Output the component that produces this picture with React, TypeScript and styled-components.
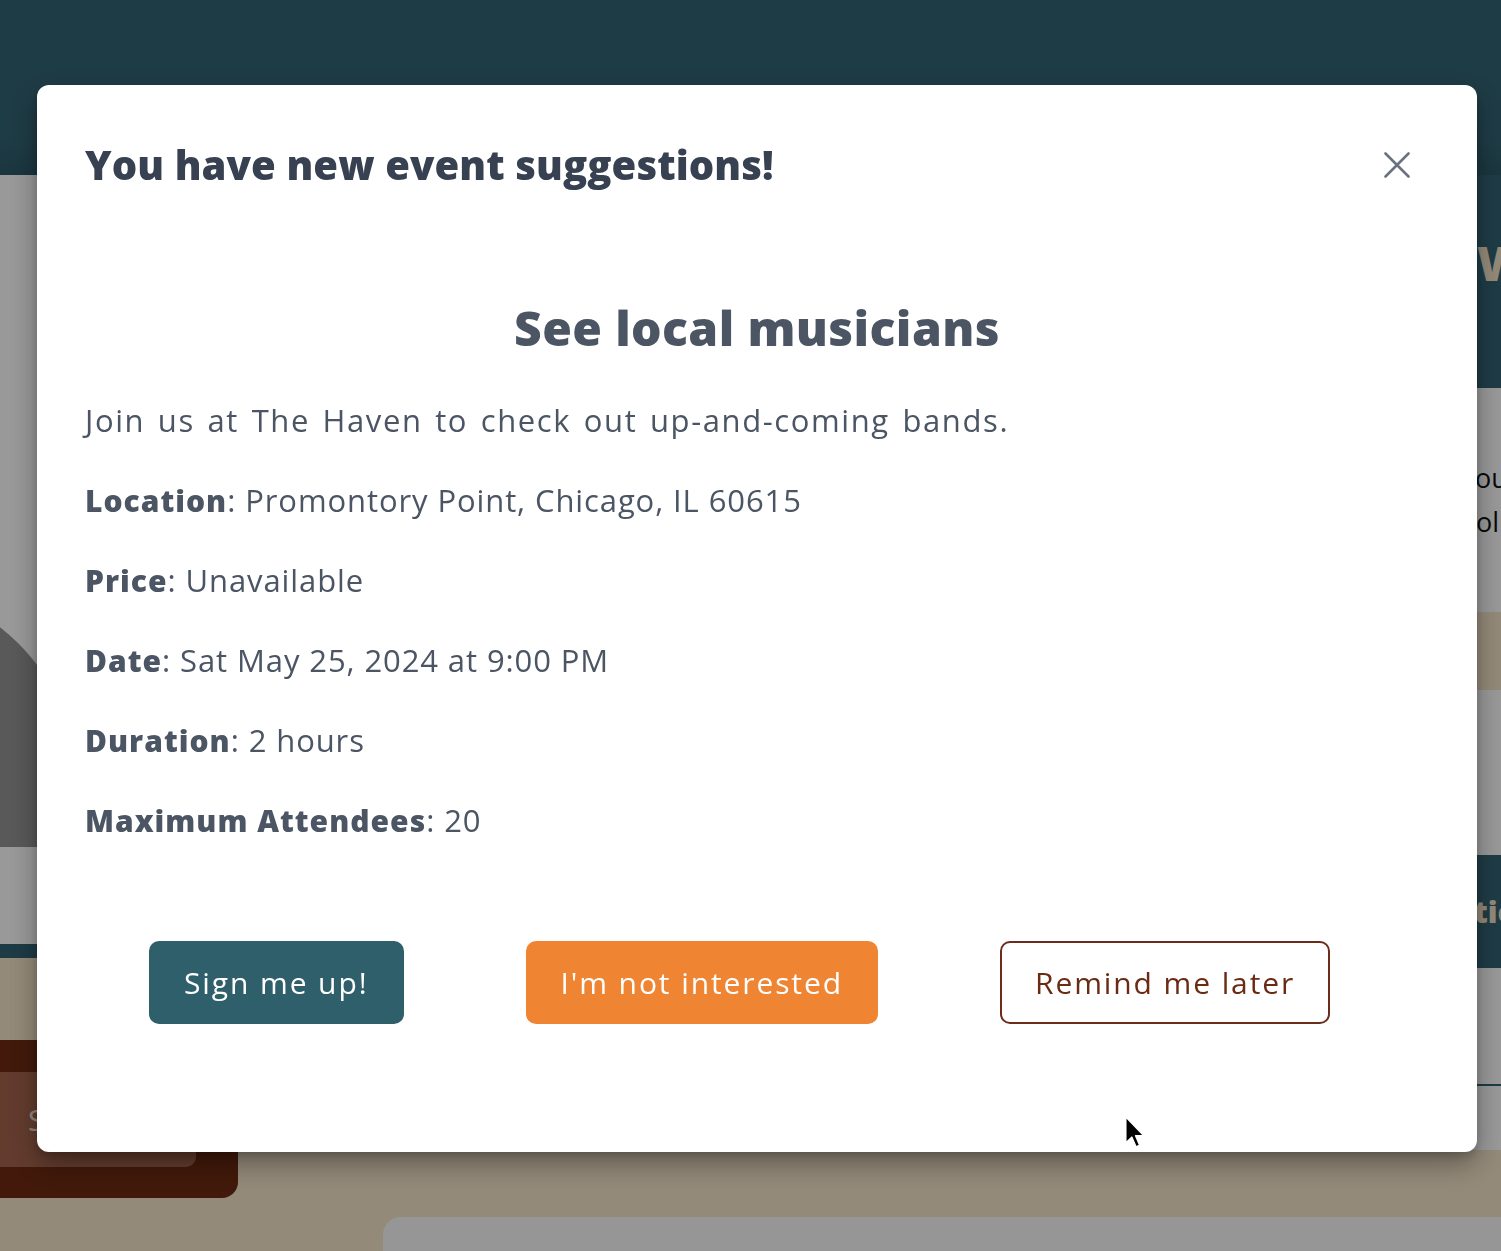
import React from "react";
import styled, { createGlobalStyle } from "styled-components";

const Global = createGlobalStyle`
  html, body { margin: 0; padding: 0; }
  body {
    font-family: "Open Sans", "Noto Sans", sans-serif;
    background: #f7e6cb;
    overflow: hidden;
  }
  *, *::before, *::after { box-sizing: border-box; }
`;

/* ---------- page behind the modal ---------- */

const Page = styled.div`
  width: 1501px;
  height: 1251px;
  background: #f7e6cb;
  display: flex;
  flex-direction: column;
  overflow: hidden;
`;

const TopBar = styled.header`
  height: 175px;
  flex-shrink: 0;
  background: linear-gradient(180deg, #336474 0%, #336474 80%, #2c5a69 100%);
`;

const Columns = styled.div`
  display: grid;
  grid-template-columns: 1400px 101px;
  align-items: start;
`;

const LeftCol = styled.div`
  display: flex;
  flex-direction: column;
  gap: 82px;
`;

const ProfilePanel = styled.section`
  height: 783px;
  background: #ffffff;
  border-bottom: 14px solid #326273;
  padding-top: 410px;
  overflow: hidden;
`;

const AvatarFrame = styled.div`
  height: 262px;
  overflow: hidden;
`;

const Avatar = styled.div`
  width: 400px;
  height: 400px;
  margin-left: -323px;
  border-radius: 50%;
  background: #949494;
`;

const ActionCard = styled.div`
  width: 238px;
  height: 158px;
  background: #6e2b11;
  border-radius: 0 16px 16px 0;
  padding: 32px 42px 0 0;
`;

const ActionButton = styled.div`
  width: 196px;
  height: 95px;
  background: #a5644d;
  border-radius: 0 10px 10px 0;
  display: flex;
  align-items: center;
  padding-left: 28px;
  font-size: 30px;
  color: #f4e3d3;
`;

const RightCol = styled.div`
  display: flex;
  flex-direction: column;
`;

const Hero = styled.section`
  height: 213px;
  background: #336474;
  display: flex;
  align-items: center;
  padding: 0 0 38px 77px;
  white-space: nowrap;
  font-size: 48px;
  font-weight: 800;
  color: #f7e6cb;
`;

const SideCard = styled.section<{ $h: number; $gapAfter?: number }>`
  height: ${(p) => p.$h}px;
  margin-bottom: ${(p) => p.$gapAfter ?? 0}px;
  background: #ffffff;
  padding: 68px 0 0 60px;
  white-space: nowrap;
  font-size: 27px;
  line-height: 44px;
  color: #111111;
`;

const SideBand = styled.section`
  height: 113px;
  background: #336474;
  display: flex;
  align-items: center;
  padding-left: 36px;
  white-space: nowrap;
  font-size: 30px;
  font-weight: 800;
  color: #f7e6cb;
`;

const SideFooter = styled.section`
  height: 182px;
  background: #ffffff;
  display: flex;
  flex-direction: column;
`;

const SideRule = styled.div`
  margin-top: 116px;
  height: 2px;
  background: #326273;
`;

const BottomCard = styled.section`
  margin: 19px 0 0 383px;
  flex: 1;
  background: #fbfbfb;
  border-radius: 18px 0 0 0;
`;

/* ---------- modal ---------- */

const Backdrop = styled.div`
  position: fixed;
  inset: 0;
  background: rgba(0, 0, 0, 0.4);
  display: flex;
  align-items: flex-start;
  padding: 85px 0 0 37px;
`;

const Modal = styled.div`
  width: 1440px;
  height: 1067px;
  background: #ffffff;
  border-radius: 12px;
  box-shadow: 0 12px 28px rgba(0, 0, 0, 0.35), 0 4px 8px rgba(0, 0, 0, 0.15);
  padding: 56px 48px 0 48px;
  display: flex;
  flex-direction: column;
`;

const ModalHeader = styled.div`
  display: flex;
  align-items: center;
  justify-content: space-between;
  height: 48px;
`;

const Title = styled.h2`
  margin: 0;
  font-size: 40px;
  line-height: 48px;
  font-weight: 800;
  letter-spacing: 0.1px;
  color: #374151;
`;

const CloseButton = styled.button`
  border: 0;
  background: transparent;
  padding: 0;
  margin-right: 19px;
  width: 26px;
  height: 26px;
  display: flex;
  cursor: pointer;
`;

const EventTitle = styled.h3`
  margin: 111px 0 0 0;
  text-align: center;
  font-size: 48px;
  line-height: 56px;
  font-weight: 800;
  letter-spacing: 0.4px;
  color: #4b5563;
`;

const Details = styled.div`
  margin-top: 44px;
  display: flex;
  flex-direction: column;
  gap: 40px;
`;

const Line = styled.p<{ $lead?: boolean }>`
  margin: 0;
  height: 40px;
  font-size: 31px;
  line-height: 40px;
  letter-spacing: ${(p) => (p.$lead ? "1.6px" : "0.9px")};
  word-spacing: ${(p) => (p.$lead ? "3px" : "0")};
  color: #4b5563;
  white-space: nowrap;
`;

const Label = styled.strong`
  font-weight: 800;
  font-size: 30px;
  line-height: 1;
  letter-spacing: 1px;
  color: #4b5563;
`;

const Actions = styled.div`
  margin-top: 101px;
  padding-left: 64px;
  display: flex;
  gap: 122px;
`;

type Variant = "primary" | "warn" | "outline";

const ActionBtn = styled.button<{ $variant: Variant }>`
  height: 83px;
  padding: 0 33px;
  border-radius: 10px;
  font-family: inherit;
  font-size: 30px;
  letter-spacing: 1.9px;
  cursor: pointer;
  background: ${(p) =>
    p.$variant === "primary" ? "#2e5f6b" : p.$variant === "warn" ? "#ef8533" : "#ffffff"};
  color: ${(p) => (p.$variant === "outline" ? "#6b2a14" : "#ffffff")};
  border: 2px solid
    ${(p) =>
      p.$variant === "primary" ? "#2e5f6b" : p.$variant === "warn" ? "#ef8533" : "#6b2d1a"};
`;

const Pointer = styled.svg`
  position: fixed;
  left: 1124px;
  top: 1115px;
  pointer-events: none;
`;

const details: [string, string][] = [
  ["Location", "Promontory Point, Chicago, IL 60615"],
  ["Price", "Unavailable"],
  ["Date", "Sat May 25, 2024 at 9:00 PM"],
  ["Duration", "2 hours"],
  ["Maximum Attendees", "20"],
];

export default function App() {
  return (
    <>
      <Global />
      <Page>
        <TopBar />
        <Columns>
          <LeftCol>
            <ProfilePanel>
              <AvatarFrame>
                <Avatar />
              </AvatarFrame>
            </ProfilePanel>
            <ActionCard>
              <ActionButton>Sign up</ActionButton>
            </ActionCard>
          </LeftCol>
          <RightCol>
            <Hero>Welcome</Hero>
            <SideCard $h={224} $gapAfter={78}>
              Your events
              <br />
              Volunteer
            </SideCard>
            <SideCard $h={165} />
            <SideBand>Actions</SideBand>
            <SideFooter>
              <SideRule />
            </SideFooter>
          </RightCol>
        </Columns>
        <BottomCard />
      </Page>

      <Backdrop>
        <Modal role="dialog" aria-modal="true">
          <ModalHeader>
            <Title>You have new event suggestions!</Title>
            <CloseButton aria-label="Close">
              <svg width="26" height="26" viewBox="0 0 26 26" fill="none">
                <path
                  d="M1.5 1.5 L24.5 24.5 M24.5 1.5 L1.5 24.5"
                  stroke="#6b7280"
                  strokeWidth="2.6"
                  strokeLinecap="round"
                />
              </svg>
            </CloseButton>
          </ModalHeader>

          <EventTitle>See local musicians</EventTitle>

          <Details>
            <Line $lead>Join us at The Haven to check out up-and-coming bands.</Line>
            {details.map(([k, v]) => (
              <Line key={k}>
                <Label>{k}</Label>: {v}
              </Line>
            ))}
          </Details>

          <Actions>
            <ActionBtn $variant="primary">Sign me up!</ActionBtn>
            <ActionBtn $variant="warn">I'm not interested</ActionBtn>
            <ActionBtn $variant="outline">Remind me later</ActionBtn>
          </Actions>
        </Modal>
      </Backdrop>

      <Pointer width="22" height="34" viewBox="0 0 13 20">
        <path
          d="M1 1 L1 16.5 L4.6 13.1 L7.1 18.9 L9.4 17.9 L6.9 12.2 L11.8 12.2 Z"
          fill="#000"
          stroke="#fff"
          strokeWidth="1"
          strokeLinejoin="round"
        />
      </Pointer>
    </>
  );
}
